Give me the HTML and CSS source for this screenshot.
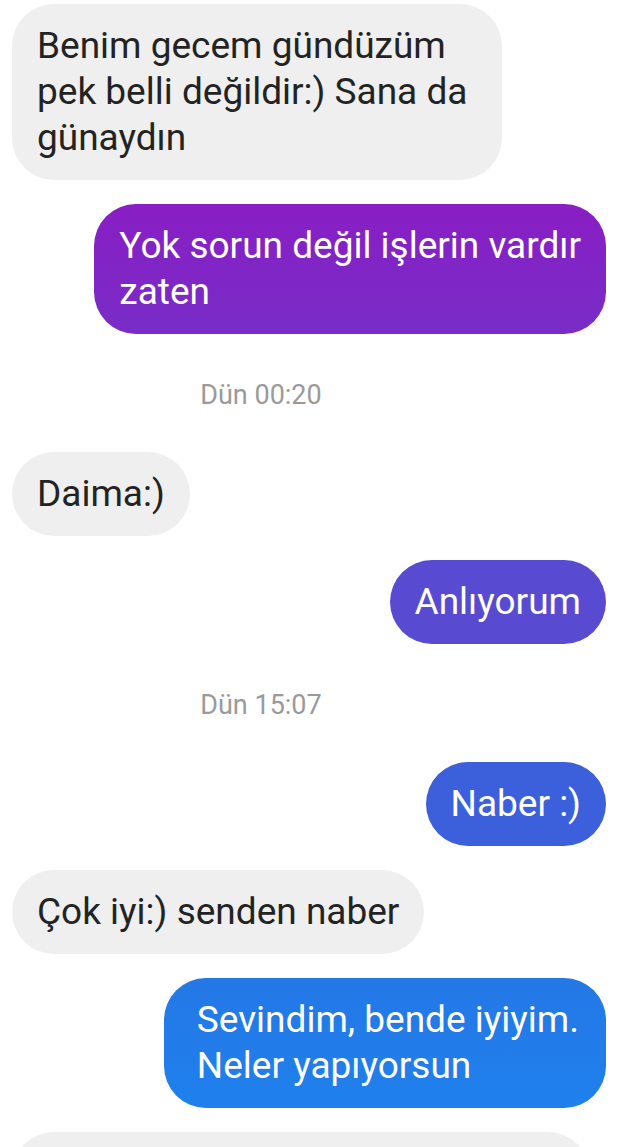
FILE: index.html
```html
<!DOCTYPE html>
<html lang="tr">
<head>
<meta charset="utf-8">
<link rel="stylesheet" href="styles.css">
</head>
<body>
<div class="chat">
  <div class="row in"><div class="bubble gray first">Benim gecem gündüzüm<br>pek belli değildir:) Sana da<br>günaydın</div></div>
  <div class="row out"><div class="bubble c1">Yok sorun değil işlerin vardır<br>zaten</div></div>
  <div class="stamp">Dün 00:20</div>
  <div class="row in"><div class="bubble gray">Daima:)</div></div>
  <div class="row out"><div class="bubble c2">Anlıyorum</div></div>
  <div class="stamp">Dün 15:07</div>
  <div class="row out"><div class="bubble c3">Naber :)</div></div>
  <div class="row in"><div class="bubble gray">Çok iyi:) senden naber</div></div>
  <div class="row out"><div class="bubble c4">Sevindim, bende iyiyim.<br>Neler yapıyorsun</div></div>
  <div class="row in"><div class="bubble gray wide">&nbsp;</div></div>
</div>
</body>
</html>
```
FILE: styles.css
```css
html, body {
  margin: 0;
  padding: 0;
  background: #ffffff;
  height: 1147px;
  overflow: hidden;
}
.chat {
  display: flex;
  flex-direction: column;
  gap: 24px;
  padding: 4px 15px 0 12px;
  font-family: Roboto, "Noto Sans", sans-serif;
}
.row {
  display: flex;
}
.row.in { justify-content: flex-start; }
.row.out { justify-content: flex-end; }
.bubble {
  font-size: 37px;
  line-height: 46px;
  padding: 19px 25px;
  border-radius: 42px;
  color: #ffffff;
  white-space: nowrap;
}
.bubble.gray {
  background: #efefef;
  color: #232323;
}
.bubble.first {
  padding-right: 35px;
}
.bubble.wide {
  width: 528px;
}
.c1 { background: linear-gradient(180deg, #891ec4 0%, #782dc7 100%); }
.c2 { background: #584bd1; }
.c3 { background: #3c5fdc; }
.c4 {
  background: linear-gradient(180deg, #2478e6 0%, #1f80ec 100%);
  padding-left: 33px;
  padding-right: 27px;
}
.stamp {
  text-align: center;
  font-size: 27px;
  line-height: 30px;
  color: #9a9a9a;
  margin: 22px 0 18px;
  padding-right: 96px;
}
```
